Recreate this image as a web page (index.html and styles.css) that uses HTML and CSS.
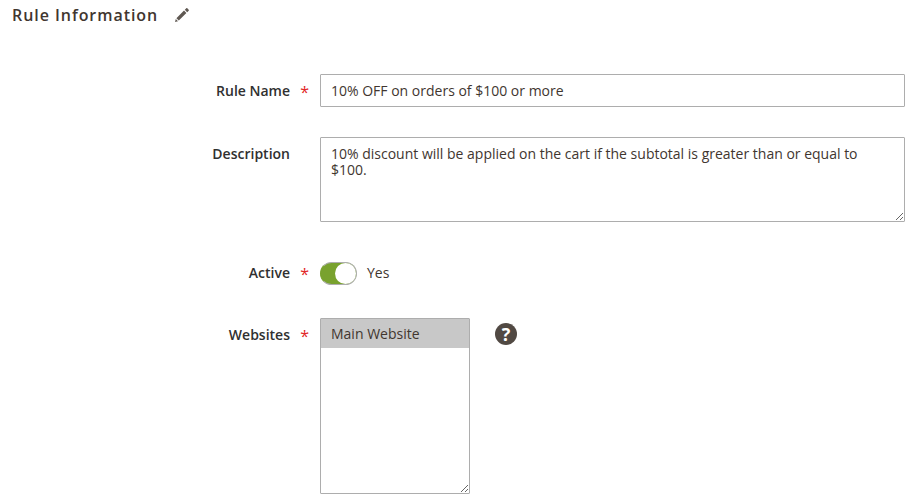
FILE: index.html
```
<!DOCTYPE html>
<html lang="en">
<head>
<meta charset="utf-8">
<title>Rule Information</title>
<link rel="stylesheet" href="styles.css">
</head>
<body>
<section class="panel">
  <header class="panel-head">
    <h2 class="panel-title">Rule Information</h2>
    <svg class="edit-icon" width="16" height="16" viewBox="0 0 16 16" aria-hidden="true"><path d="M1 15l.8-3 2.2 2.2zM2.4 11.2l7.6-7.6 2.4 2.4-7.6 7.6zM10.8 2.8l1.5-1.5c.3-.3.7-.3 1 0l1.4 1.4c.3.3.3.7 0 1l-1.5 1.5z" fill="#5f5852"/></svg>
  </header>
  <form class="form">
    <div class="row row-name">
      <label class="label required" for="name">Rule Name</label>
      <input class="text-input" id="name" type="text" value="10% OFF on orders of $100 or more">
    </div>
    <div class="row row-desc">
      <label class="label" for="desc">Description</label>
      <textarea class="text-area" id="desc">10% discount will be applied on the cart if the subtotal is greater than or equal to $100.</textarea>
    </div>
    <div class="row row-active">
      <span class="label required">Active</span>
      <div class="toggle-wrap">
        <span class="toggle"><span class="knob"></span></span>
        <span class="toggle-text">Yes</span>
      </div>
    </div>
    <div class="row row-sites">
      <label class="label required" for="sites">Websites</label>
      <div class="sites-wrap">
        <select class="multi" id="sites" multiple>
          <option selected>Main Website</option>
        </select>
        <span class="help" aria-hidden="true">?</span>
      </div>
    </div>
  </form>
</section>
</body>
</html>
```
FILE: styles.css
```
* { box-sizing: border-box; }
html, body { margin: 0; padding: 0; background: #fff; }
body { font-family: "Open Sans", sans-serif; font-size: 14px; color: #41362f; overflow: hidden; height: 501px; }
.panel { padding: 5px 13px 0 12px; }
.panel-head { display: flex; align-items: center; height: 20px; }
.panel-title { margin: 0; font-size: 16px; font-weight: 600; letter-spacing: 0.95px; color: #41362f; line-height: 20px; }
.edit-icon { margin-left: 16px; margin-top: -1px; }
.form { margin-top: 49px; display: flex; flex-direction: column; }
.row { display: grid; grid-template-columns: 278px 1fr; column-gap: 30px; }
.row-desc { margin-top: 30px; }
.row-active { margin-top: 40px; }
.row-sites { margin-top: 33px; }
.label { text-align: right; font-weight: 600; color: #303030; line-height: 20px; padding-top: 7px; position: relative; }
.required::after { content: "*"; color: #e22626; position: absolute; right: -19px; top: 8px; font-size: 16px; font-weight: 400; }
.text-input, .text-area, .multi { font-family: "Open Sans", sans-serif; font-size: 14px; color: #41362f; border: 1px solid #adadad; border-radius: 1px; background: #fff; outline: none; display: block; }
.text-input { width: 585px; height: 33px; padding: 0 10px; }
.text-area { width: 585px; height: 85px; padding: 8px 10px; line-height: 16px; resize: both; }
.row-active .label { padding-top: 1px; }
.row-active .required::after { top: 2px; }
.toggle-wrap { display: flex; align-items: center; gap: 10px; height: 23px; }
.toggle { width: 37px; height: 23px; border-radius: 12px; background: #79a22e; border: 1px solid #adadad; border-left-color: #79a22e; display: flex; justify-content: flex-end; }
.knob { width: 21px; height: 21px; border-radius: 50%; background: #fff; }
.toggle-text { line-height: 20px; margin-top: -2px; }
.sites-wrap { display: flex; align-items: flex-start; gap: 25px; }
.multi { width: 150px; height: 176px; padding: 0; resize: both; overflow: auto; }
.multi option { padding: 5px 10px; min-height: 29px; line-height: 19px; color: #41362f; }
.multi option:checked { background: #c8c8c8 linear-gradient(#c8c8c8, #c8c8c8); }
.help { width: 22px; height: 22px; margin-top: 5px; border-radius: 50%; background: #514943; color: #fff; font-weight: 700; font-size: 18px; line-height: 22px; text-align: center; }
```
